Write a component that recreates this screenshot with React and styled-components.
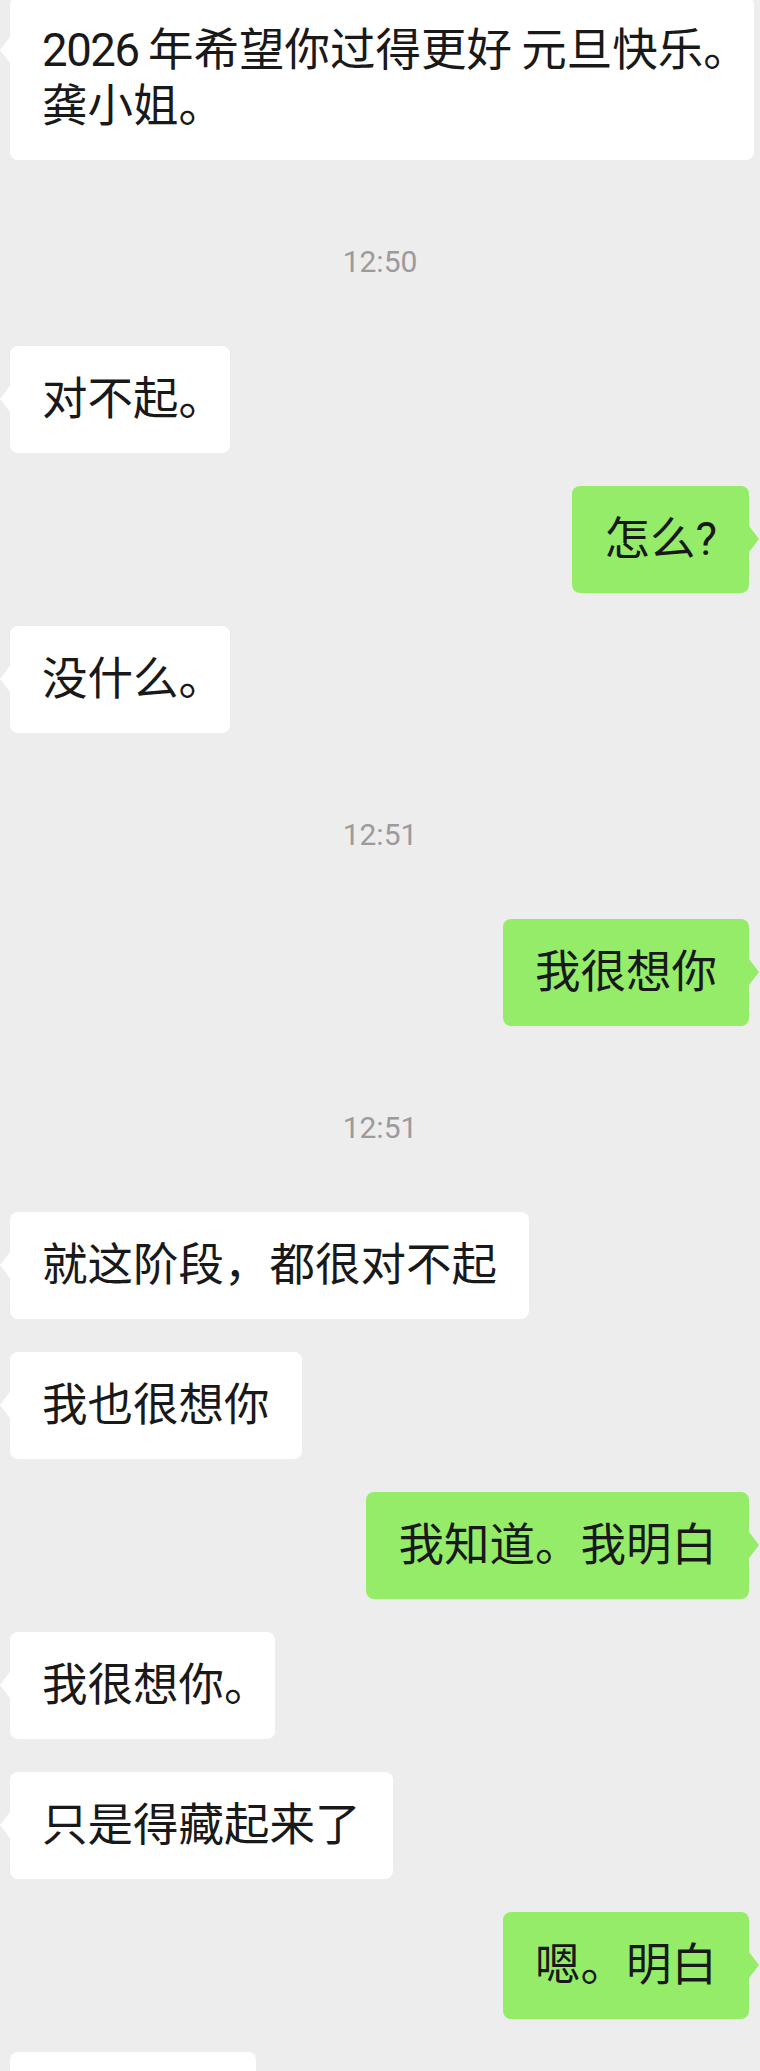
import React from 'react';
import styled, { createGlobalStyle } from 'styled-components';

const GlobalStyle = createGlobalStyle`
  html, body {
    margin: 0;
    padding: 0;
    background: #ededed;
  }
  body {
    font-family: Roboto, "Noto Sans CJK SC", sans-serif;
  }
`

const Screen = styled.div`
  width: 760px;
  height: 2071px;
  overflow: hidden;
  background: #ededed;
`

const Thread = styled.div`
  display: flex;
  flex-direction: column;
  gap: 33px;
  margin-top: -3px;
`

const Row = styled.div`
  display: flex;
  justify-content: ${p => (p.$mine ? 'flex-end' : 'flex-start')};
  padding: 0 11px 0 10px;
`

const Bubble = styled.div`
  position: relative;
  padding: 26px 32px 25px;
  font-size: 45.5px;
  line-height: 56px;
  word-spacing: -2px;
  color: #191919;
  white-space: nowrap;
  background: ${p => (p.$mine ? '#95ec69' : '#ffffff')};
  border-radius: 8px;

  &::before {
    content: '';
    position: absolute;
    top: 40px;
    border-top: 13px solid transparent;
    border-bottom: 13px solid transparent;
    ${p =>
      p.$mine
        ? 'left: 100%; border-left: 10px solid #95ec69;'
        : 'right: 100%; border-right: 10px solid #ffffff;'}
  }
`

// digits on the phone run a little tighter than Roboto
const Num = styled.span`
  letter-spacing: -1.4px;
`

// line-final full-width stop is drawn trimmed, as on the phone
const EndPunct = styled.span`
  display: inline-block;
  width: 19px;
  overflow: visible;
`

const Time = styled.div`
  padding: 51px 0 33px;
  text-align: center;
  font-family: Roboto, sans-serif;
  font-size: 30px;
  line-height: 36px;
  color: #9b9b9b;
`

const messages = [
  { from: 'them', lines: ['2026 年希望你过得更好 元旦快乐。', '龚小姐。'] },
  { time: '12:50' },
  { from: 'them', lines: ['对不起。'] },
  { from: 'me', lines: ['怎么?'] },
  { from: 'them', lines: ['没什么。'] },
  { time: '12:51' },
  { from: 'me', lines: ['我很想你'] },
  { time: '12:51' },
  { from: 'them', lines: ['就这阶段，都很对不起'] },
  { from: 'them', lines: ['我也很想你'] },
  { from: 'me', lines: ['我知道。我明白'] },
  { from: 'them', lines: ['我很想你。'] },
  { from: 'them', lines: ['只是得藏起来了'] },
  { from: 'me', lines: ['嗯。明白'] },
  { from: 'them', lines: ['我知道的'] },
]

const Line = ({ text }) => {
  const parts = text.split(/(\d+)/)
  let tail = null
  const last = parts[parts.length - 1]
  if (last.endsWith('。')) {
    parts[parts.length - 1] = last.slice(0, -1)
    tail = <EndPunct>。</EndPunct>
  }
  return (
    <>
      {parts.map((p, i) => (/^\d+$/.test(p) ? <Num key={i}>{p}</Num> : p))}
      {tail}
    </>
  )
}

export default function App() {
  return (
    <Screen>
      <GlobalStyle />
      <Thread>
        {messages.map((m, i) =>
          m.time ? (
            <Time key={i}>{m.time}</Time>
          ) : (
            <Row key={i} $mine={m.from === 'me'}>
              <Bubble $mine={m.from === 'me'}>
                {m.lines.map((l, j) => (
                  <React.Fragment key={j}>
                    {j > 0 && <br />}
                    <Line text={l} />
                  </React.Fragment>
                ))}
              </Bubble>
            </Row>
          )
        )}
      </Thread>
    </Screen>
  )
}
